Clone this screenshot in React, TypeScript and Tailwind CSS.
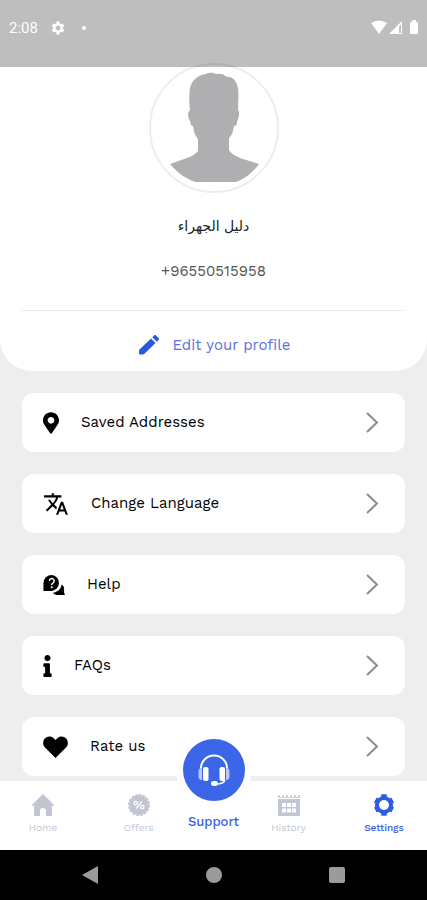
import React from "react";
import { MdTranslate, MdSettings } from "react-icons/md";
import { FaInfo, FaMapMarkerAlt } from "react-icons/fa";

function Avatar() {
  return (
    <svg viewBox="0 0 130 130" className="size-[130px] shrink-0" role="img" aria-label="Profile picture">
      <circle cx="65" cy="65" r="64" fill="none" stroke="#000" strokeOpacity="0.07" strokeWidth="2" />
      <path
        fill="#afafb1"
        d="M41 47 C40 40 40 31 41 25 C43 17 49 12 57 11 C61 9 64 10 67 11 C71 10 75 11 78 14 C83 13 87 17 89 25 C90 33 89 40 89 47 C91 48 90 54 88 59 C88 62 87 63 85 63 C84 69 83 72 80 75 L80 87 C82 91 88 94 94 96 L110 101 C105 108 96 116 87 119 L47 119 C36 116 28 109 21 101 L38 95 C43 93 47 91 49 88 L49 76 C46 73 45 69 44 63 C41 63 42 60 41 58 C38 53 39 48 41 47 Z"
      />
    </svg>
  );
}

function PencilIcon() {
  return (
    <svg viewBox="0 0 24 24" className="size-6 text-[#2459e0]" fill="currentColor" aria-hidden="true">
      <path d="M14 5.500 18.500 10 7.500 20.800c-.6.500-1.200.7-2 .7H3.500c-.9 0-1.500-.6-1.500-1.500v-1.800c0-.8.200-1.400.8-2z" />
      <path d="M15.300 4.200 17 2.500c.6-.6 1.400-.6 2 0L21.500 5c.6.600.6 1.400 0 2l-1.700 1.700z" />
    </svg>
  );
}

function HelpIcon() {
  return (
    <svg viewBox="0 0 24 24" className="size-[22px]" aria-hidden="true">
      <path d="M9.500 1A9 9 0 0 0 .5 10v8.500h9A8.800 8.800 0 0 0 9.500 1z" />
      <path d="M20.300 11.500c-.8 5-4.300 8.400-9.600 9 1.400 1.800 3.300 2.500 5.500 2.500H24l-1-2.500V16c0-1.800-1-3.500-2.700-4.500z" />
      <path d="M7 7.700a2.600 2.600 0 1 1 4 2.100c-1 .6-1.500 1-1.500 2.200" fill="none" stroke="#fff" strokeWidth="1.600" />
      <circle cx="9.500" cy="14.500" r="1.100" fill="#fff" />
    </svg>
  );
}

function HeartIcon() {
  return (
    <svg viewBox="0 0 25 22" className="h-[22px] w-[25px]" aria-hidden="true">
      <path d="M12.500 22 2 11.500C-.5 9-.3 5 1.800 2.600 4.200 0 8.200-.2 10.700 2.200l1.800 1.800 1.800-1.800c2.500-2.400 6.500-2.200 8.900.4C25.300 5 25.500 9 23 11.500z" />
    </svg>
  );
}

function HomeIcon() {
  return (
    <svg viewBox="0 0 24 24" className="size-6" fill="currentColor" aria-hidden="true">
      <path d="M12 1 22.700 11.500c.5.700 0 1.500-.8 1.500H21v8.500c0 1-.5 1.500-1.500 1.500H15v-5a3 3 0 0 0-6 0v5H4.500C3.500 23 3 22.500 3 21.500V13h-.9c-.8 0-1.300-.8-.8-1.500z" />
    </svg>
  );
}

function OffersIcon() {
  return (
    <svg viewBox="0 0 24 24" className="size-6" aria-hidden="true">
      <circle cx="12" cy="12" r="10" fill="currentColor" />
      <circle cx="12" cy="12" r="10" fill="none" stroke="currentColor" strokeWidth="2" strokeDasharray="2.600 1.300" />
      <g fill="none" stroke="#fff" strokeWidth="1.300">
        <circle cx="8.700" cy="10" r="1.700" />
        <circle cx="15.300" cy="14" r="1.700" />
        <path d="m15 8.500-6 7" />
      </g>
    </svg>
  );
}

function HistoryIcon() {
  return (
    <svg viewBox="0 0 24 24" className="size-6" aria-hidden="true">
      <path d="M1 2h2v2h2V2h2v2h2V2h2v2h2V2h2v2h2V2h2v2h2V2h2v3H1z" fill="currentColor" opacity="0.8" />
      <path d="M1 6h22v15.500c0 1-.5 1.500-1.500 1.500h-19C1.500 23 1 22.500 1 21.500z" fill="currentColor" />
      <path d="M5 10h4v4H5zm5 0h4v4h-4zm5 0h4v4h-4zM5 15.500h4v4H5zm5 0h4v4h-4zm5 0h4v4h-4z" fill="#fff" />
    </svg>
  );
}

function GearIcon() {
  return (
    <svg viewBox="0 0 24 24" className="size-6" fill="none" stroke="currentColor" aria-hidden="true">
      <circle cx="12" cy="12" r="7" strokeWidth="4" />
      <path
        strokeWidth="5.500"
        d="M12 1.200v4.300M12 18.500v4.300M3.340 7l3.030 1.750M17.630 15.250l3.030 1.750M3.340 17l3.030-1.750M17.630 8.750l3.030-1.750"
      />
    </svg>
  );
}

function HeadsetIcon() {
  return (
    <svg viewBox="0 0 36 36" className="size-9" aria-hidden="true">
      <path d="M5 16a13 12.500 0 0 1 26 0" fill="none" stroke="#fff" strokeWidth="2" />
      <path d="M29 28c-1 3-4 4-9 4" fill="none" stroke="#fff" strokeWidth="1.500" />
      <path d="M6 16v12c-3 0-3.500-2-3.500-4v-4c0-2 .5-4 3.500-4zm24 0v12c3 0 3.500-2 3.500-4v-4c0-2-.5-4-3.500-4z" fill="#b9c6f6" />
      <rect x="7" y="15" width="5.500" height="14" rx="2" fill="#fff" />
      <rect x="23.500" y="15" width="5.500" height="14" rx="2" fill="#fff" />
      <rect x="15" y="29" width="7" height="5" rx="2.500" fill="#fff" />
    </svg>
  );
}

function Chevron() {
  return (
    <svg viewBox="0 0 14 22" className="h-[22px] w-[14px]" fill="none" stroke="#8b8b8b" strokeWidth="2" aria-hidden="true">
      <path d="m2 1 10 9.500L2 20" />
    </svg>
  );
}

function MenuItem({ icon, label }: { icon: React.ReactNode; label: string }) {
  return (
    <button type="button" className="flex h-[59px] items-center rounded-xl bg-white pr-[26px] pl-[21px] text-left text-[15px] text-black">
      {icon}
      <span className="ml-[22px] grow">{label}</span>
      <Chevron />
    </button>
  );
}

function Tab({ icon, label, active = false }: { icon: React.ReactNode; label: string; active?: boolean }) {
  return (
    <a href="#" className={`flex w-[62px] flex-col items-center text-[10px] leading-[22px] ${active ? "font-medium text-[#2f5ce0]" : "text-[#c3c5d3]"}`}>
      {icon}
      {label}
    </a>
  );
}

export default function App() {
  return (
    <div className="flex min-h-screen flex-col bg-[#eeeeee] font-['Work_Sans','Inter','Noto_Sans',sans-serif]">
      <header className="flex h-[67px] items-start justify-between bg-[#bebebe] pt-[18px] pr-2 pl-[9px] text-white">
        <div className="flex h-5 items-center font-['Roboto',sans-serif] text-[15px]">
          <span>2:08</span>
          <MdSettings className="ml-3 size-4" />
          <span className="ml-4 size-1 rounded-full bg-white" />
        </div>
        <svg viewBox="0 0 48 20" className="h-5 w-12" fill="#fff" aria-hidden="true">
          <path d="M0 5q8-5 16 0L8 16z" />
          <path d="M18 16 31 3v13z" />
          <path d="M28 8.500 30 6.500V15h-2z" fill="#bebebe" />
          <path d="M39 4h2V2h4v2h2v12h-8z" />
        </svg>
      </header>

      <section className="flex flex-col items-center rounded-b-[32px] bg-white px-[22px] pb-[14px]">
        <div className="-mt-1">
          <Avatar />
        </div>
        <h1 dir="rtl" className="mt-[21px] font-['DejaVu_Sans',sans-serif] text-sm leading-6 text-[#222]">دليل الجهراء</h1>
        <p className="mt-[21px] text-[15px] leading-6 text-[#555]">+96550515958</p>
        <hr className="mt-[27px] w-full border-[#ececec]" />
        <button type="button" className="mt-[22px] flex items-center gap-3 text-[15px] leading-6 text-[#5a6fe4]">
          <PencilIcon />
          Edit your profile
        </button>
      </section>

      <main className="flex grow flex-col gap-[22px] px-[22px] pt-[22px] pb-[5px]">
        <MenuItem icon={<FaMapMarkerAlt className="h-[22px] w-4" />} label="Saved Addresses" />
        <MenuItem icon={<MdTranslate className="size-[26px]" />} label="Change Language" />
        <MenuItem icon={<HelpIcon />} label="Help" />
        <MenuItem icon={<FaInfo className="h-[22px] w-[9px]" />} label="FAQs" />
        <MenuItem icon={<HeartIcon />} label="Rate us" />
      </main>

      <nav className="grid h-[69px] grid-cols-[1fr_76px_1fr] bg-white">
        <div className="flex justify-between pt-3 pr-1.5 pl-3">
          <Tab icon={<HomeIcon />} label="Home" />
          <Tab icon={<OffersIcon />} label="Offers" />
        </div>
        <a href="#" className="-mt-[49px] flex flex-col items-center text-[13px] font-medium text-[#3d5fe0]">
          <span className="flex size-[76px] shrink-0 items-center justify-center rounded-full bg-white">
            <span className="flex size-[62px] items-center justify-center rounded-full bg-[#3b66e8]">
              <HeadsetIcon />
            </span>
          </span>
          <span className="mt-1 leading-5">Support</span>
        </a>
        <div className="flex justify-between pt-3 pr-3 pl-1.5">
          <Tab icon={<HistoryIcon />} label="History" />
          <Tab icon={<GearIcon />} label="Settings" active />
        </div>
      </nav>

      <footer className="grid h-[50px] grid-cols-[1fr_auto_1fr] items-center gap-[107px] bg-black">
        <button type="button" aria-label="Back" className="justify-self-end">
          <svg viewBox="0 0 18 18" className="size-[18px]" fill="#9b9b9b"><path d="M1 9 17 0v18z" /></svg>
        </button>
        <button type="button" aria-label="Home screen" className="size-4 rounded-full bg-[#9b9b9b]" />
        <button type="button" aria-label="Recent apps" className="size-4 rounded-xs bg-[#9b9b9b]" />
      </footer>
    </div>
  );
}
